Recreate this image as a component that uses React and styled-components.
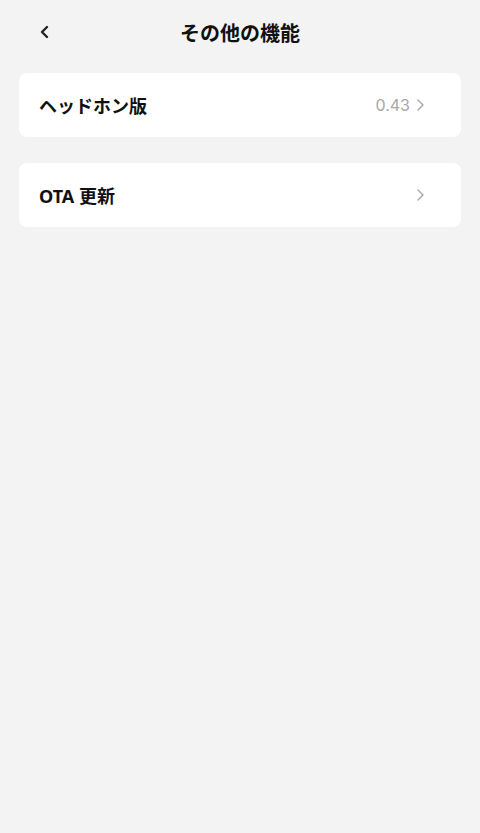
import React from 'react';
import styled, { createGlobalStyle } from 'styled-components';

const Global = createGlobalStyle`
  html, body {
    margin: 0;
    padding: 0;
    background: #f3f3f3;
  }
  body {
    font-family: "Noto Sans", "Noto Sans CJK JP", sans-serif;
  }
`;

const Page = styled.div`
  min-height: 833px;
  background: #f3f3f3;
`;

const Header = styled.div`
  height: 66px;
  position: relative;
  display: flex;
  align-items: center;
  justify-content: center;
`;

const Back = styled.button`
  position: absolute;
  left: 32px;
  top: 19px;
  width: 26px;
  height: 26px;
  padding: 0;
  border: none;
  background: none;
  display: flex;
  align-items: center;
  justify-content: center;
`;

const Title = styled.h1`
  margin: 0 0 2px;
  font-size: 20px;
  font-weight: 700;
  color: #111;
`;

const List = styled.div`
  display: flex;
  flex-direction: column;
  gap: 26px;
  padding: 7px 19px 0;
`;

const Card = styled.div`
  height: 64px;
  background: #fff;
  border-radius: 8px;
  display: flex;
  align-items: center;
  padding: 0 36px 0 20px;
`;

const Label = styled.span`
  flex: 1;
  font-size: 18px;
  font-weight: 700;
  color: #111;
  margin-top: -1px;
`;

const Value = styled.span`
  font-family: "Inter", "Noto Sans", sans-serif;
  font-size: 16px;
  color: #a8a8a8;
  margin-right: 6px;
`;

const Chevron = () => (
  <svg width="9" height="14" viewBox="0 0 9 14" fill="none">
    <path d="M2 2l5 5-5 5" stroke="#a8a8a8" strokeWidth="1.4" strokeLinecap="round" strokeLinejoin="round" />
  </svg>
);

const Row = ({ label, value }) => (
  <Card>
    <Label>{label}</Label>
    {value && <Value>{value}</Value>}
    <Chevron />
  </Card>
);

export default function App() {
  return (
    <Page>
      <Global />
      <Header>
        <Back>
          <svg width="14" height="16" viewBox="0 0 14 16" fill="none">
            <path d="M9 3L4 8l5 5" stroke="#222" strokeWidth="2.4" strokeLinecap="round" strokeLinejoin="round" />
          </svg>
        </Back>
        <Title>その他の機能</Title>
      </Header>
      <List>
        <Row label="ヘッドホン版" value="0.43" />
        <Row label="OTA 更新" />
      </List>
    </Page>
  );
}
